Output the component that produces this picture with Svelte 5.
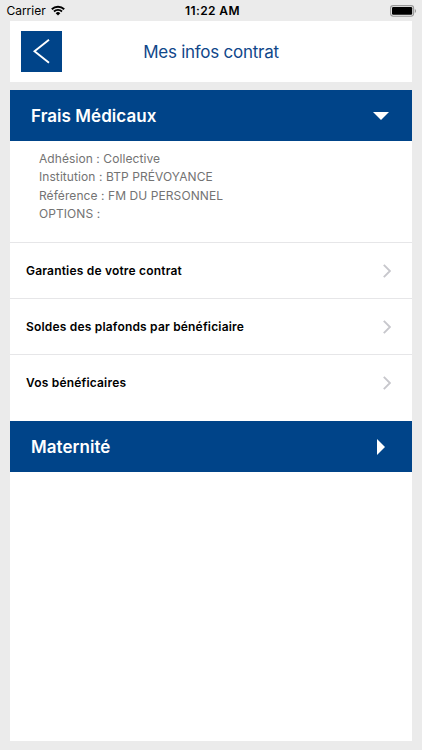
<script>
	const details = [
		{ label: 'Adhésion', value: 'Collective' },
		{ label: 'Institution', value: 'BTP PRÉVOYANCE' },
		{ label: 'Référence', value: 'FM DU PERSONNEL' },
		{ label: 'OPTIONS', value: '' }
	];

	const links = [
		'Garanties de votre contrat',
		'Soldes des plafonds par bénéficiaire',
		'Vos bénéficaires'
	];

	let medicalOpen = true;
</script>

<div class="screen">
	<div class="status">
		<span class="carrier">
			Carrier
			<svg width="14" height="11" viewBox="0 0 14 11">
				<path d="M0.8 4.2a8.9 8.9 0 0 1 12.4 0M3 6.5a5.8 5.8 0 0 1 8 0" fill="none" stroke="#000" stroke-width="1.9" />
				<path d="M4.7 8.2a3.3 3.3 0 0 1 4.6 0L7 10.5z" />
			</svg>
		</span>
		<span class="time">11:22 AM</span>
		<svg class="battery" width="27" height="12" viewBox="0 0 27 12">
			<rect x="0.6" y="0.6" width="23" height="10.6" rx="2.6" fill="none" stroke="#999" stroke-width="1.1" />
			<rect x="2" y="2" width="20.2" height="7.8" rx="1.2" />
			<path d="M24.8 4v4a2.2 2.2 0 0 0 0-4z" fill="#999" />
		</svg>
	</div>

	<header>
		<button class="back" aria-label="Retour">
			<svg width="41" height="41" viewBox="0 0 41 41">
				<path d="M28 8.8L13.5 20.3L28 31.8" fill="none" stroke="#fff" stroke-width="1.9" />
			</svg>
		</button>
		<h1>Mes infos contrat</h1>
	</header>

	<main>
		<button class="section" on:click={() => (medicalOpen = !medicalOpen)}>
			<span>Frais Médicaux</span>
			<svg width="16" height="16" viewBox="0 0 16 16">
				<path d={medicalOpen ? 'M0 4h16L8 12z' : 'M4 0v16l8-8z'} fill="#fff" />
			</svg>
		</button>

		{#if medicalOpen}
			<div class="details">
				{#each details as item}
					<p>{item.label} : {item.value}</p>
				{/each}
			</div>
			<ul>
				{#each links as link}
					<li>
						<span>{link}</span>
						<svg width="8" height="14" viewBox="0 0 8 14">
							<path d="M0.8 0.8L7 7L0.8 13.2" fill="none" stroke="#c7c7cc" stroke-width="1.9" />
						</svg>
					</li>
				{/each}
			</ul>
		{/if}

		<button class="section">
			<span>Maternité</span>
			<svg width="16" height="16" viewBox="0 0 16 16">
				<path d="M4 0v16l8-8z" fill="#fff" />
			</svg>
		</button>
	</main>
</div>

<style>
	:global(body) {
		background: #ebebeb;
	}
	.screen {
		box-sizing: border-box;
		display: flex;
		flex-direction: column;
		height: 750px;
		padding: 0 10.4px 8.6px;
		background: #ebebeb;
		font-family: Inter, 'Liberation Sans', sans-serif;
	}
	.status {
		display: grid;
		grid-template-columns: 1fr auto 1fr;
		align-items: center;
		height: 21px;
		margin: 0 -4px;
		font-size: 12px;
	}
	.carrier {
		display: flex;
		align-items: center;
		gap: 5px;
	}
	.time {
		padding-left: 3px;
		font-weight: 600;
		letter-spacing: 0.4px;
	}
	.battery {
		justify-self: end;
		margin-right: -1px;
	}
	header {
		display: grid;
		grid-template-columns: 41px 1fr 41px;
		align-items: center;
		height: 61px;
		padding: 0 10.4px;
		margin-bottom: 8px;
		background: #fff;
	}
	button {
		border: none;
		border-radius: 0;
		padding: 0;
		background: #004489;
		color: #fff;
		font-family: inherit;
	}
	.back {
		width: 41px;
		height: 41px;
	}
	svg {
		display: block;
	}
	h1 {
		margin: 0;
		text-align: center;
		font-size: 17px;
		font-weight: 400;
		letter-spacing: -0.25px;
		color: #10478a;
	}
	main {
		flex: 1;
		background: #fff;
	}
	.section {
		display: flex;
		justify-content: space-between;
		align-items: center;
		width: 100%;
		height: 51px;
		padding: 0 22.6px 0 20.6px;
		font-size: 17px;
		font-weight: 600;
		letter-spacing: 0.05px;
	}
	.details {
		box-sizing: border-box;
		height: 101px;
		padding: 9px 28.6px 0;
		font-size: 12px;
		letter-spacing: 0.08px;
		color: #737373;
	}
	p {
		margin: 0;
		line-height: 18.3px;
	}
	ul {
		margin: 0 0 11px;
		padding: 0;
		list-style: none;
	}
	li {
		box-sizing: border-box;
		display: flex;
		justify-content: space-between;
		align-items: center;
		height: 56px;
		padding: 0 20.6px 0 15.6px;
		border-top: 1px solid #e6e6e8;
		font-size: 12px;
		font-weight: 600;
		letter-spacing: 0.19px;
	}
</style>
